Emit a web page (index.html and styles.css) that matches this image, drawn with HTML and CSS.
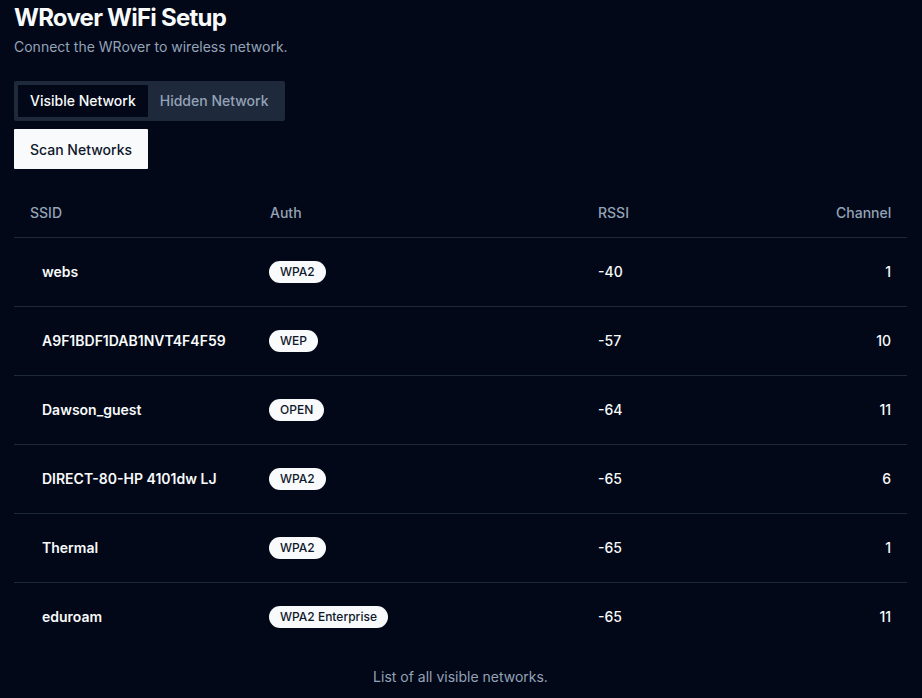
FILE: index.html
```html
<!DOCTYPE html>
<html lang="en">
<head>
<meta charset="utf-8">
<title>WRover WiFi Setup</title>
<link rel="stylesheet" href="styles.css">
</head>
<body>
<main class="page">
  <h1 class="title">WRover WiFi Setup</h1>
  <p class="subtitle">Connect the WRover to wireless network.</p>

  <div class="tabs">
    <button class="tab active">Visible Network</button>
    <button class="tab">Hidden Network</button>
  </div>

  <button class="scan">Scan Networks</button>

  <table class="net-table">
    <colgroup>
      <col class="c-ssid"><col class="c-auth"><col class="c-rssi"><col class="c-ch">
    </colgroup>
    <thead>
      <tr><th>SSID</th><th>Auth</th><th>RSSI</th><th class="right">Channel</th></tr>
    </thead>
    <tbody>
      <tr><td class="ssid"><span>webs</span></td><td><span class="badge">WPA2</span></td><td>-40</td><td class="right">1</td></tr>
      <tr><td class="ssid"><span>A9F1BDF1DAB1NVT4F4F59</span></td><td><span class="badge">WEP</span></td><td>-57</td><td class="right">10</td></tr>
      <tr><td class="ssid"><span>Dawson_guest</span></td><td><span class="badge">OPEN</span></td><td>-64</td><td class="right">11</td></tr>
      <tr><td class="ssid"><span>DIRECT-80-HP 4101dw LJ</span></td><td><span class="badge">WPA2</span></td><td>-65</td><td class="right">6</td></tr>
      <tr><td class="ssid"><span>Thermal</span></td><td><span class="badge">WPA2</span></td><td>-65</td><td class="right">1</td></tr>
      <tr><td class="ssid"><span>eduroam</span></td><td><span class="badge">WPA2 Enterprise</span></td><td>-65</td><td class="right">11</td></tr>
    </tbody>
    <caption>List of all visible networks.</caption>
  </table>
</main>
</body>
</html>
```

FILE: styles.css
```css
* { box-sizing: border-box; }
html, body {
  margin: 0;
  background: #020817;
  color: #f8fafc;
  font-family: Inter, "Noto Sans", sans-serif;
}
.page {
  padding: 2px 15px 0 14px;
}
.title {
  margin: 0;
  font-size: 24px;
  line-height: 32px;
  font-weight: 700;
  letter-spacing: -0.75px;
}
.subtitle {
  margin: 3px 0 0;
  font-size: 14px;
  line-height: 20px;
  color: #94a3b8;
}
.tabs {
  display: inline-flex;
  margin-top: 24px;
  padding: 4px;
  background: #1e293b;
  border-radius: 2px;
  height: 40px;
}
.tab {
  border: 0;
  background: transparent;
  color: #94a3b8;
  font-family: inherit;
  font-size: 14px;
  font-weight: 500;
  line-height: 20px;
  padding: 6px 12px;
  height: 32px;
  border-radius: 1px;
}
.tab.active {
  background: #020817;
  color: #f8fafc;
}
.scan {
  display: block;
  margin-top: 8px;
  height: 40px;
  padding: 0 16px;
  border: 0;
  background: #f8fafc;
  color: #0f172a;
  font-family: inherit;
  font-size: 14px;
  font-weight: 500;
  border-radius: 1px;
}
.net-table {
  margin-top: 20px;
  width: 100%;
  border-collapse: collapse;
  table-layout: fixed;
  font-size: 14px;
  caption-side: bottom;
}
.c-ssid { width: 240px; }
.c-auth { width: 328px; }
.c-rssi { width: 238px; }
.net-table th {
  height: 48px;
  padding: 0 16px;
  text-align: left;
  font-weight: 500;
  color: #94a3b8;
  border-bottom: 1px solid #1e293b;
}
.net-table td {
  height: 69px;
  padding: 0 16px;
  font-weight: 500;
  border-bottom: 1px solid #1e293b;
}
.net-table tbody tr:last-child td { border-bottom: 0; }
.net-table .right { text-align: right; }
.ssid span {
  padding-left: 12px;
  font-weight: 600;
}
.badge {
  display: inline-block;
  padding: 2px 10px;
  border: 1px solid transparent;
  border-radius: 999px;
  background: #f8fafc;
  color: #0f172a;
  font-size: 12px;
  line-height: 16px;
  font-weight: 500;
  margin-left: -1px;
}
.net-table caption {
  margin-top: 16px;
  font-size: 14px;
  line-height: 20px;
  color: #94a3b8;
}
```
